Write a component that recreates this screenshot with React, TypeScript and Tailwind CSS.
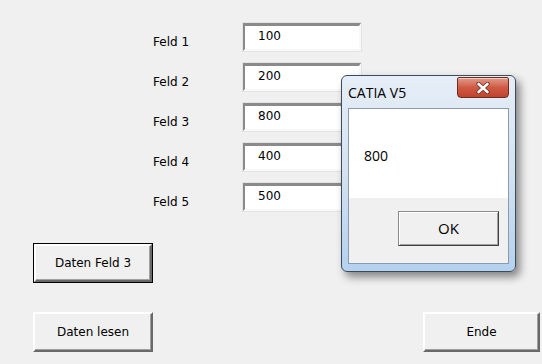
import React from "react";

const FIELDS = [
  { label: "Feld 1", value: "100" },
  { label: "Feld 2", value: "200" },
  { label: "Feld 3", value: "800" },
  { label: "Feld 4", value: "400" },
  { label: "Feld 5", value: "500" },
];

const ui = { fontFamily: "Tahoma, 'DejaVu Sans', 'Liberation Sans', sans-serif" };
const aero = { fontFamily: "'Segoe UI', 'Open Sans', 'Noto Sans', sans-serif" };

// classic raised win32 button (size set per use)
const btnRaised =
  "flex items-center justify-center border-t-2 border-l-2 border-r-2 border-b-2 border-t-white border-l-white border-r-[#696969] border-b-[#696969] bg-[#f0f0f0] text-[12px] text-black shadow-[inset_-1px_-1px_0_#a0a0a0]";

function TextBox({ value }: { value: string }) {
  return (
    <div className="h-[28px] w-[118px] border-t-[3px] border-l-2 border-r-2 border-b-2 border-t-[#8a8a8a] border-l-[#8a8a8a] border-r-[#f8f8f8] border-b-[#f8f8f8] bg-white pl-[13px] pt-[2px] text-[12px] leading-[16px] text-black shadow-[0_0_0_1px_#e3e3e3]">
      {value}
    </div>
  );
}

function CloseButton() {
  return (
    <div className="flex h-[21px] w-[52px] items-center justify-center rounded-b-[4px] rounded-t-[2px] border border-[#6d2a20] bg-gradient-to-b from-[#e29a8a] via-[#cf5a44] to-[#c0432d] shadow-[inset_0_1px_0_rgba(255,255,255,0.5)]">
      <svg width="14" height="12" viewBox="0 0 14 12">
        <path
          d="M2.5 2 L11.5 10 M11.5 2 L2.5 10"
          stroke="#6a2a20"
          strokeWidth="4.2"
          strokeLinecap="round"
        />
        <path
          d="M2.5 2 L11.5 10 M11.5 2 L2.5 10"
          stroke="#ffffff"
          strokeWidth="2.6"
          strokeLinecap="round"
        />
      </svg>
    </div>
  );
}

function MessageBox() {
  return (
    <div
      className="absolute left-[341px] top-[75px] flex h-[197px] w-[175px] flex-col rounded-[6px] border border-[#3c4b5c] bg-gradient-to-b from-[#e6eef7] via-[#d3e2f1] to-[#b4d1ee] px-[6px] pb-[7px] shadow-[4px_5px_8px_rgba(0,0,0,0.45)]"
      style={aero}
    >
      <div className="flex h-[32px] items-start justify-between">
        <span className="mt-[8px] text-[14px] leading-[18px] text-black">CATIA V5</span>
        <div className="mt-px">
          <CloseButton />
        </div>
      </div>
      <div className="flex flex-1 flex-col border border-[#8c9aab] bg-[#f0f0f0]">
        <div className="flex h-[89px] items-center bg-white pl-[15px] pt-[4px] text-[14px] text-black">
          800
        </div>
        <div className="flex flex-1 justify-end pr-[9px] pt-[13px]">
          <div className="flex h-[35px] w-[101px] items-center justify-center border border-t-[#8a8a8a] border-l-[#8a8a8a] border-r-[#404040] border-b-[#404040] bg-[#f0f0f0] text-[15px] text-black shadow-[inset_1px_1px_0_#fff,inset_-1px_-1px_0_#a0a0a0]">
            OK
          </div>
        </div>
      </div>
    </div>
  );
}

export default function App() {
  return (
    <div className="relative h-[364px] w-[542px] overflow-hidden bg-[#f0f0f0]" style={ui}>
      <div className="flex flex-col gap-[12px] pl-[153px] pt-[23px]">
        {FIELDS.map((f) => (
          <div key={f.label} className="flex h-[28px] items-start">
            <span className="w-[90px] pt-[11px] text-[12px] leading-[16px] text-black">
              {f.label}
            </span>
            <TextBox value={f.value} />
          </div>
        ))}
      </div>

      <div className="pl-[33px] pt-[32px]">
        <div className="w-[120px] border border-black">
          <div className={`${btnRaised} h-[38px] w-[118px]`}>Daten Feld 3</div>
        </div>
      </div>

      <div className="flex justify-between pl-[33px] pr-[2px] pt-[29px]">
        <div className={`${btnRaised} h-[40px] w-[120px]`}>Daten lesen</div>
        <div className={`${btnRaised} h-[40px] w-[117px]`}>Ende</div>
      </div>

      <MessageBox />
    </div>
  );
}
